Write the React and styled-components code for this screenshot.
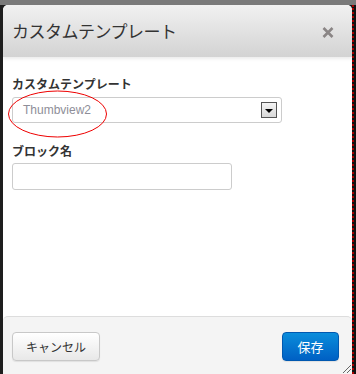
import styled, { createGlobalStyle } from 'styled-components'

const GlobalStyle = createGlobalStyle`
    html, body {
        margin: 0;
        padding: 0;
        background: #1e1e1e;
    }
    body {
        font-family: "Liberation Sans", "Noto Sans CJK JP", sans-serif;
        color: #333;
    }
`;

const Backdrop = styled.div`
    width: 356px;
    height: 374px;
    box-sizing: border-box;
    padding: 5px 0 0 3px;
    background: linear-gradient(#7a7a7a 0 5px, #1e1e1e 5px);
    display: flex;
    overflow: hidden;
`;

const Dialog = styled.div`
    position: relative;
    width: 349px;
    background: #fff;
    border-radius: 5px 5px 0 0;
    display: flex;
    flex-direction: column;
    overflow: hidden;
`;

const Rail = styled.div`
    width: 4px;
    box-sizing: border-box;
    border-left: 2px dotted #a00;
    background: #111;
`;

const Header = styled.div`
    height: 52px;
    flex-shrink: 0;
    padding: 0 9px;
    display: flex;
    align-items: center;
    justify-content: space-between;
    background: linear-gradient(#f1f1f1, #d3d3d3);
    box-shadow: 0 2px 3px rgba(0, 0, 0, 0.08);
`;

const Title = styled.h3`
    margin: 0 0 2px;
    font-size: 17px;
    letter-spacing: -0.5px;
    font-weight: normal;
    color: #333;
`;

const Close = styled.svg`
    margin-right: 9px;
    margin-top: 3px;
`;

const Body = styled.div`
    flex: 1;
    padding: 21px 9px 0;
    display: flex;
    flex-direction: column;
`;

const Label = styled.label`
    font-size: 12px;
    line-height: 15px;
    font-weight: bold;
    color: #333;
    margin-bottom: ${p => p.gap}px;
`;

const Field = styled.div`
    position: relative;
    width: ${p => p.width}px;
    height: ${p => p.height}px;
    box-sizing: border-box;
    border: 1px solid #ccc;
    border-radius: 3px;
    background: #fff;
    display: flex;
    align-items: center;
    justify-content: space-between;
    padding: 0 4px 0 10px;
    margin-bottom: ${p => p.gap}px;
`;

const Value = styled.span`
    font-size: 12px;
    color: #8e8e98;
`;

const Arrow = styled.span`
    width: 16px;
    height: 16px;
    box-sizing: border-box;
    border: 1px solid #555;
    background: linear-gradient(#f4f4f4, #d8d8d8);
    display: flex;
    align-items: center;
    justify-content: center;
    &::after {
        content: '';
        border-left: 4px solid transparent;
        border-right: 4px solid transparent;
        border-top: 4px solid #000;
        margin-top: 1px;
    }
`;

const Mark = styled.svg`
    position: absolute;
    left: -6px;
    top: -8px;
`;

const Footer = styled.div`
    height: 58px;
    flex-shrink: 0;
    box-sizing: border-box;
    border-top: 1px solid #ddd;
    border-radius: 5px 5px 0 0;
    background: #f4f4f4;
    display: flex;
    align-items: flex-start;
    justify-content: space-between;
    padding: 15px 13px 0 9px;
`;

const Button = styled.button`
    height: 29px;
    width: ${p => p.width}px;
    border-radius: 4px;
    font-family: inherit;
    font-size: ${p => p.size}px;
    border: 1px solid ${p => (p.primary ? '#0058b0' : '#c8c8c8')};
    color: ${p => (p.primary ? '#fff' : '#333')};
    background: ${p => (p.primary
        ? 'linear-gradient(#0a8ddb, #0060c4)'
        : 'linear-gradient(#fff, #e8e8e8)')};
    box-shadow: 0 1px 1px rgba(0, 0, 0, 0.08);
`;

const Grip = styled.svg`
    position: absolute;
    right: 0;
    bottom: 0;
`;

const App = () => {
  return (
    <>
      <GlobalStyle />
      <Backdrop>
        <Dialog>
          <Header>
            <Title>カスタムテンプレート</Title>
            <Close width="12" height="11" viewBox="0 0 12 11">
              <path d="M1.5 1 L10.5 10 M10.5 1 L1.5 10" stroke="#8a8585" strokeWidth="2.6" />
            </Close>
          </Header>
          <Body>
            <Label gap={4}>カスタムテンプレート</Label>
            <Field width={270} height={26} gap={22}>
              <Value>Thumbview2</Value>
              <Arrow />
              <Mark width="102" height="49">
                <ellipse cx="50.5" cy="24" rx="49" ry="23" fill="none" stroke="#e00" strokeWidth="1" />
              </Mark>
            </Field>
            <Label gap={3}>ブロック名</Label>
            <Field width={220} height={27} gap={0} />
          </Body>
          <Footer>
            <Button width={88} size={12}>キャンセル</Button>
            <Button width={57} size={13} primary>保存</Button>
          </Footer>
          <Grip width="12" height="12">
            <path d="M11 3 L3 11 M11 7 L7 11" stroke="#666" strokeWidth="1" />
          </Grip>
        </Dialog>
        <Rail />
      </Backdrop>
    </>
  )
}

export default App
